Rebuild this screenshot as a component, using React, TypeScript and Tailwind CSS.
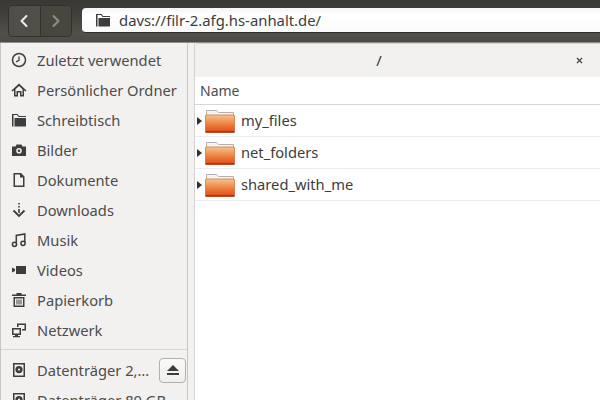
import { ChevronLeft, ChevronRight, X } from "lucide-react";
import type { ReactNode } from "react";

const Icon = ({ children }: { children: ReactNode }) => (
  <svg viewBox="0 0 16 16" className="w-4 h-4 shrink-0 text-[#3d3d3d]" fill="currentColor">
    {children}
  </svg>
);

const FolderGlyph = () => (
  <>
    <path d="M1 2h5.500L8 4h7v1H7.500L6 3H2.500v11.500H1z" />
    <rect x="3.500" y="6" width="11.500" height="8.500" />
  </>
);

const places = [
  {
    label: "Zuletzt verwendet",
    icon: (
      <>
        <circle cx="8" cy="8" r="6.500" fill="none" stroke="currentColor" strokeWidth="1.500" />
        <path d="M8 4.500V8.400L5 9.800" fill="none" stroke="currentColor" strokeWidth="1.300" />
      </>
    ),
  },
  {
    label: "Persönlicher Ordner",
    icon: <path d="M8 1.500 0.500 8.500l1.100 1.100L3 8.300V14.500h4V10.500h2v4h4V8.300l1.400 1.300 1.100-1.100zM4.500 7.300 8 4l3.500 3.300V13h-1V9h-5v4h-1z" fillRule="evenodd" />,
  },
  { label: "Schreibtisch", icon: <FolderGlyph /> },
  {
    label: "Bilder",
    icon: (
      <path d="M5.500 2.500h5l1 2H15v9.500H1V4.500h3.500zM8 6a2.800 2.800 0 1 0 0 5.600A2.800 2.800 0 0 0 8 6zm0 1.500a1.300 1.300 0 1 1 0 2.600 1.300 1.300 0 0 1 0-2.600z" fillRule="evenodd" />
    ),
  },
  { label: "Dokumente", icon: <path d="M2.500 1H10l3.500 3.500V15h-11zM4 2.500v11h8V5.500H9v-3z" fillRule="evenodd" /> },
  {
    label: "Downloads",
    icon: (
      <>
        <path d="M7.200 1h1.600v1.500H7.200zM7.200 4h1.600v1.500H7.200zM7.200 7h1.600v4H7.200z" />
        <path d="M2.500 8.500 8 14l5.500-5.500" fill="none" stroke="currentColor" strokeWidth="1.800" />
      </>
    ),
  },
  {
    label: "Musik",
    icon: (
      <>
        <path d="M5.300 11.500V3.500l8.500-1.500v8.500" fill="none" stroke="currentColor" strokeWidth="1.500" />
        <circle cx="3.500" cy="12.300" r="2.100" fill="none" stroke="currentColor" strokeWidth="1.500" />
        <circle cx="12" cy="11.300" r="2.100" fill="none" stroke="currentColor" strokeWidth="1.500" />
      </>
    ),
  },
  { label: "Videos", icon: <path d="M1 5.500l3 1.500v2l-3 1.500zM5 4h10v8H5z" /> },
  {
    label: "Papierkorb",
    icon: (
      <path d="M5.500 1h5v1.500H15V4H1V2.500h4.500zM2.500 5h11v10h-11zM4 6.500v7h8v-7zM5.500 7.500h1v5h-1zM7.500 7.500h1v5h-1zM9.500 7.500h1v5h-1z" fillRule="evenodd" />
    ),
  },
  {
    label: "Netzwerk",
    icon: (
      <path d="M1 6h9v7H7v1h2v1.200H2V14h2v-1H1zM2.500 7.500v4h6v-4zM6 1.500h9v7h-4V7h2.500V3H7.500v2H6z" fillRule="evenodd" />
    ),
  },
];

const DiskIcon = () => (
  <Icon>
    <path d="M2 1h12v14H2zM3.500 2.500v11h9v-11zM8 4a3.600 3.600 0 1 0 0 7.200A3.600 3.600 0 0 0 8 4zm0 2.500a1.100 1.100 0 1 1 0 2.200 1.100 1.100 0 0 1 0-2.200z" fillRule="evenodd" />
  </Icon>
);

const OrangeFolder = () => (
  <svg viewBox="0 0 30 24" className="w-[30px] h-6 shrink-0">
    <defs>
      <linearGradient id="folderFront" x1="0" y1="0" x2="0" y2="1">
        <stop offset="0" stopColor="#f6c48e" />
        <stop offset="0.45" stopColor="#ee8a4a" />
        <stop offset="1" stopColor="#dd4814" />
      </linearGradient>
    </defs>
    <path d="M1.500 1.500h10l2 2h15v5h-27z" fill="#f4f3f1" stroke="#b5b2ac" />
    <rect x="0.500" y="6" width="29" height="17.500" rx="1" fill="url(#folderFront)" stroke="#c9571f" strokeWidth="0.600" />
    <rect x="0.500" y="22" width="29" height="1.600" fill="#a9380d" />
  </svg>
);

const files = ["my_files", "net_folders", "shared_with_me"];

export default function App() {
  return (
    <div className="w-[600px] h-[400px] overflow-hidden flex flex-col bg-[#f2f1f0] font-['Noto_Sans',sans-serif] text-[14.700px] text-[#4c4c4c]">
      {/* toolbar */}
      <div className="h-[42px] shrink-0 flex gap-[10px] pl-2 items-start bg-[linear-gradient(#3a3935_0,#3c3b37_20%,#51504a_80%,#4c4b45_100%)]">
        <div className="mt-[5px] w-16 h-8 flex rounded-[4px] border border-[#33322e] bg-[#4f4e48] overflow-hidden">
          <div className="flex-1 flex items-center justify-center border-r border-[#33322e]">
            <ChevronLeft className="w-5 h-5 text-[#ecebe9]" strokeWidth={2.500} />
          </div>
          <div className="flex-1 flex items-center justify-center bg-[#47463f]">
            <ChevronRight className="w-5 h-5 text-[#8f8e8a]" strokeWidth={2.500} />
          </div>
        </div>
        <div className="mt-2 flex-1 h-[25px] flex items-center gap-[8px] pl-[13px] rounded-l-[4px] bg-[linear-gradient(#f5f5f5,#ffffff_30%,#fafafa)] border-b border-[#2f2e2a] text-[#3c3c3c]">
          <svg viewBox="0 0 16 16" className="w-4 h-4 text-[#3d3d3d]" fill="currentColor">
            <FolderGlyph />
          </svg>
          <span className="text-[14.850px] leading-none">davs://filr-2.afg.hs-anhalt.de/</span>
        </div>
      </div>

      <div className="flex-1 flex min-h-0 border-t border-[#8f8e8a]">
        {/* sidebar */}
        <div className="w-[188px] shrink-0 pt-[2px] border-l border-[#c8c6c2] border-r overflow-hidden">
          {places.map((p) => (
            <div key={p.label} className="h-[30px] flex items-center gap-[10px] pl-[10px]">
              <Icon>{p.icon}</Icon>
              <span className="whitespace-nowrap">{p.label}</span>
            </div>
          ))}
          <div className="h-px bg-[#d9d7d4] mt-[4px] mb-[5px]" />
          <div className="h-[30px] flex items-center gap-[10px] pl-[10px] pr-[1px]">
            <DiskIcon />
            <span className="flex-1 whitespace-nowrap">Datenträger 2,…</span>
            <div className="w-[27px] h-[25px] flex flex-col items-center justify-center gap-[2px] rounded-[4px] border border-[#b3b1ad] bg-[linear-gradient(#fafafa,#efeeec)]">
              <div className="w-0 h-0 border-x-[6px] border-x-transparent border-b-[6px] border-b-[#3d3d3d]" />
              <div className="w-3 h-[2px] bg-[#3d3d3d]" />
            </div>
          </div>
          <div className="h-[30px] flex items-center gap-[10px] pl-[10px]">
            <DiskIcon />
            <span className="whitespace-nowrap">Datenträger 80 GB</span>
          </div>
        </div>

        {/* file view */}
        <div className="flex-1 pl-[6px] min-w-0">
          <div className="h-full flex flex-col bg-white border-l border-[#d5d3cf]">
            <div className="h-[34px] shrink-0 flex items-center bg-[#f2f1f0] rounded-tl-[3px] border-t border-[#d5d3cf] pr-[16px]">
              <div className="flex-1 text-center pr-[12px] text-[#333]">/</div>
              <X className="w-[9px] h-[9px] text-[#3d3d3d]" strokeWidth={3} />
            </div>
            <div className="h-[28px] shrink-0 flex items-center pl-[5px] border-b border-[#d9d7d4] text-[14px] text-[#4c4c4c]">
              Name
            </div>
            {files.map((f) => (
              <div key={f} className="h-[32px] shrink-0 flex items-center border-b border-[#ececea] pl-[2px]">
                <div className="w-0 h-0 border-y-[4px] border-y-transparent border-l-[5px] border-l-[#2e2e2e] mr-[3px]" />
                <OrangeFolder />
                <span className="ml-[6px] text-[#3c3c3c]">{f}</span>
              </div>
            ))}
          </div>
        </div>
      </div>
    </div>
  );
}
